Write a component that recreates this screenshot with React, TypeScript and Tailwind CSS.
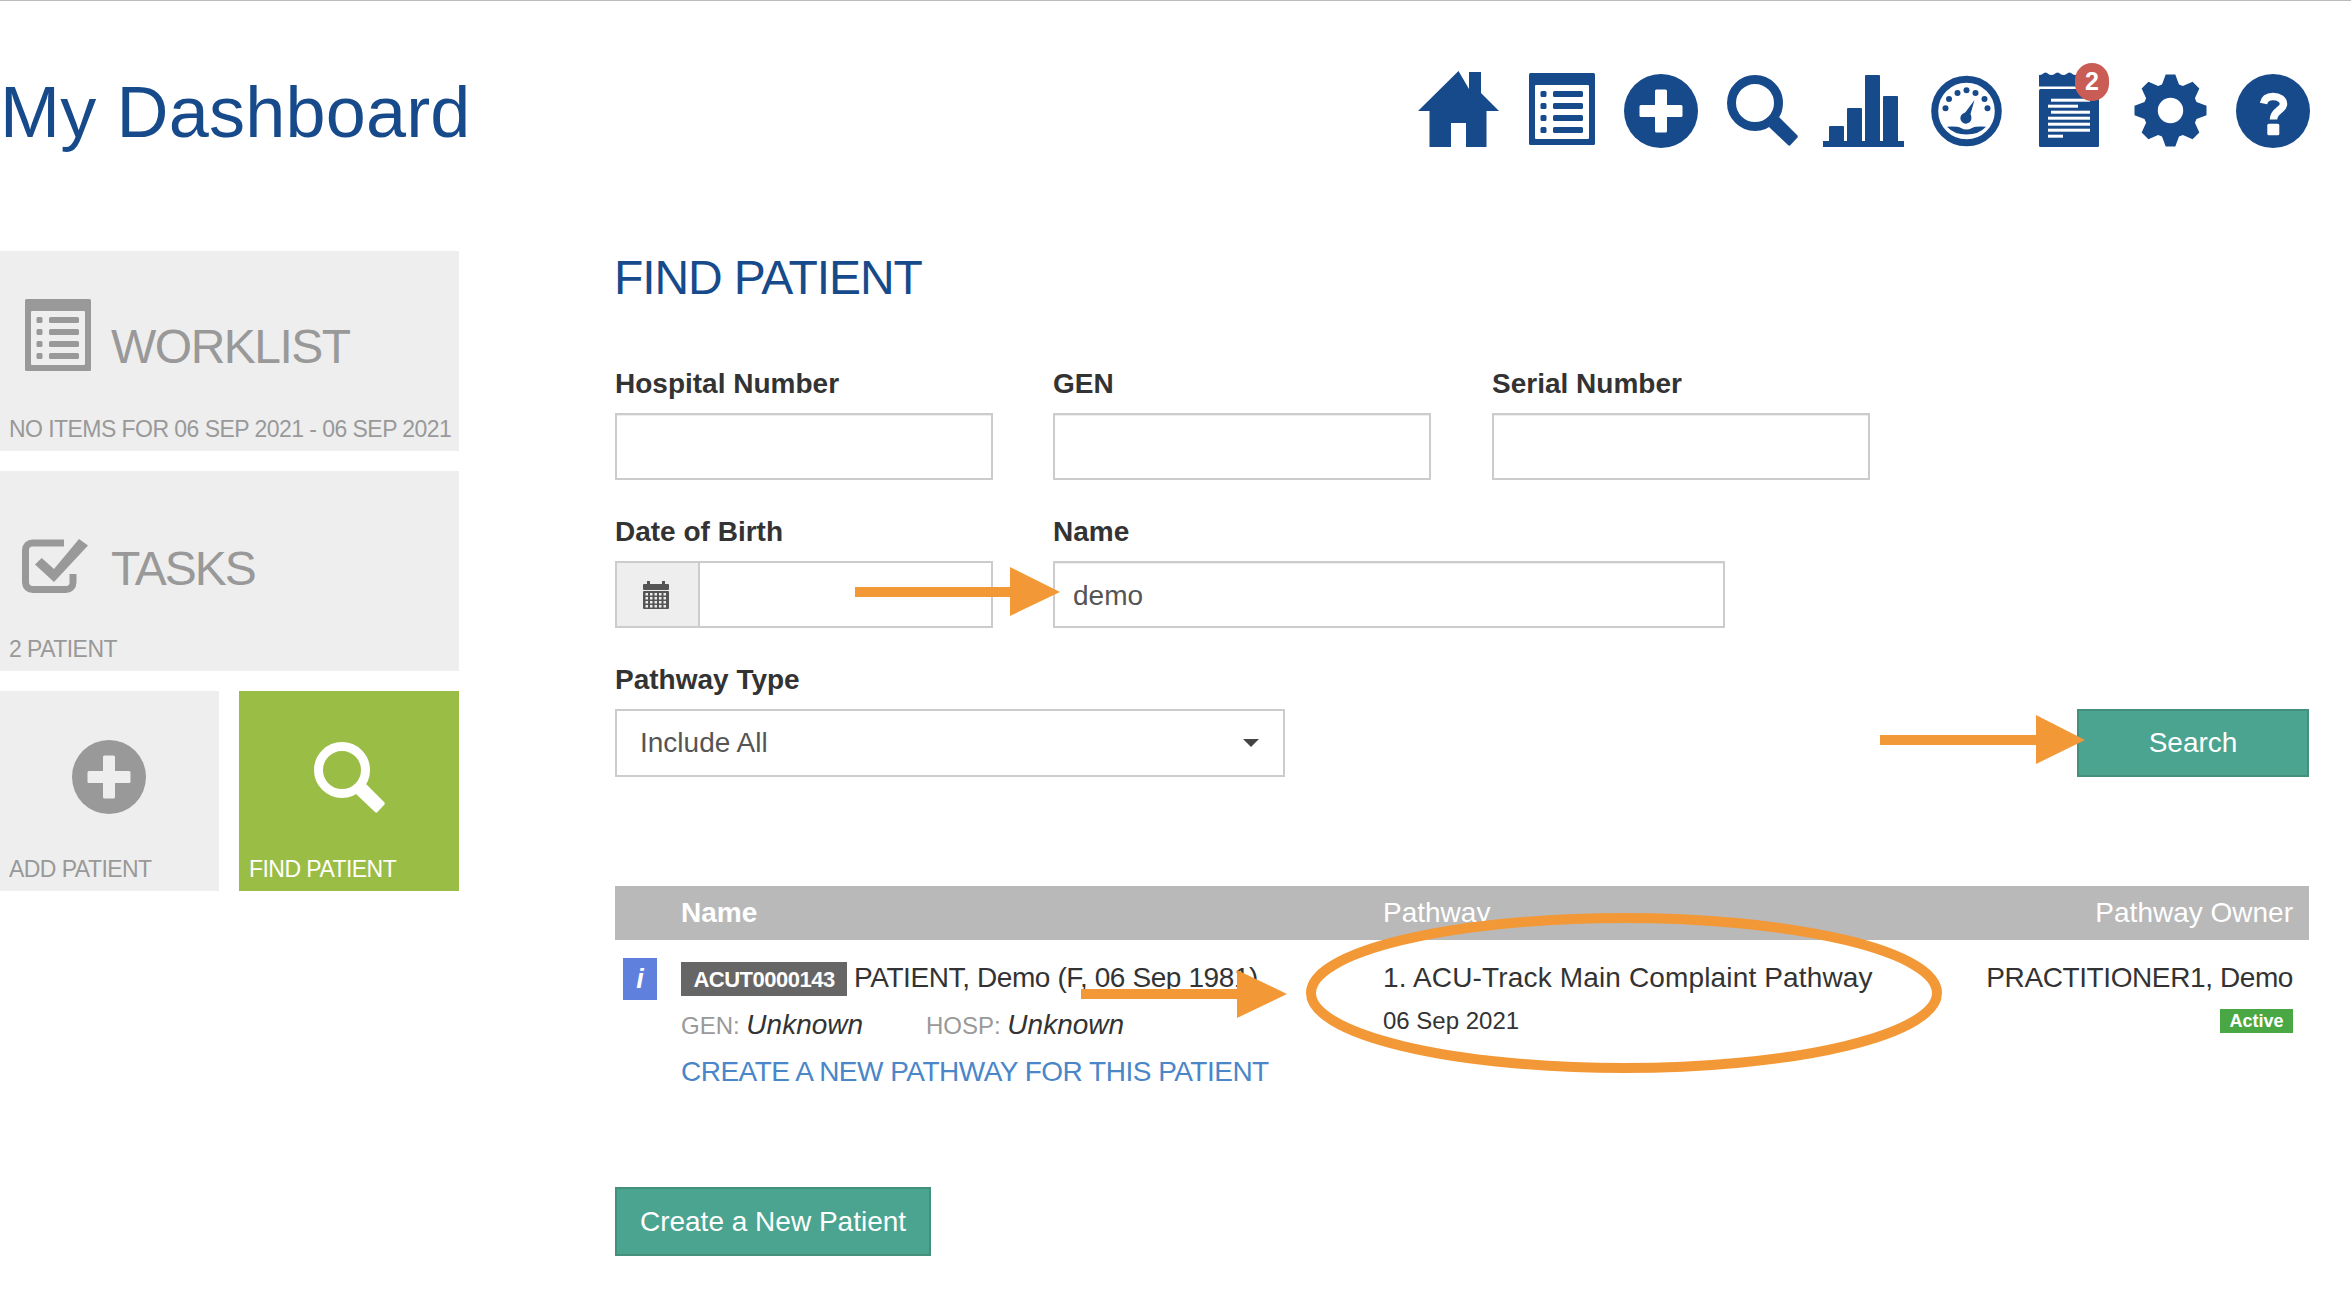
import React from "react";

function gearPath(cx: number, cy: number) {
  const pts: string[] = [];
  const rO = 36, rB = 26;
  for (let i = 0; i < 8; i++) {
    const a = (i * Math.PI) / 4;
    const p = (r: number, t: number) => {
      const x = cx + r * Math.sin(a) + t * Math.cos(a);
      const y = cy - r * Math.cos(a) + t * Math.sin(a);
      return `${x.toFixed(2)} ${y.toFixed(2)}`;
    };
    pts.push(p(rB, -8.5), p(rO, -4.8), p(rO, 4.8), p(rB, 8.5));
  }
  return "M" + pts.join("L") + "Z";
}

const Home = () => (
  <svg width="81" height="76" viewBox="0 0 81 76" className="block">
    <path fill="#174a8b" d="M40.5 0L51 18V1H63V22L81 40H68.5V76H48V52H33V76H11.5V40H0Z" />
  </svg>
);

const ListIcon = ({ c, bg }: { c: string; bg: string }) => (
  <svg width="66" height="72" viewBox="0 0 66 72" className="block">
    <rect width="66" height="72" rx="1.5" fill={c} />
    <rect x="6" y="12" width="54" height="54" rx="1" fill={bg} />
    {[18, 30, 42, 54].map((y) => (
      <g key={y} fill={c}>
        <rect x="11.5" y={y} width="6" height="6" rx="1.5" />
        <rect x="24" y={y} width="30" height="6" rx="1.5" />
      </g>
    ))}
  </svg>
);

const PlusCircle = ({ c, size, bg }: { c: string; size: number; bg: string }) => (
  <svg width={size} height={size} viewBox="0 0 74 74" className="block">
    <circle cx="37" cy="37" r="37" fill={c} />
    <rect x="31" y="15.5" width="12" height="43" rx="1.5" fill={bg} />
    <rect x="15.5" y="31" width="43" height="12" rx="1.5" fill={bg} />
  </svg>
);

const Lens = ({ c }: { c: string }) => (
  <svg width="71" height="71" viewBox="0 0 71 71" className="block">
    <circle cx="28" cy="28" r="23.5" fill="none" stroke={c} strokeWidth="9" />
    <path fill={c} d="M42 52L52 42L70.5 60.5Q71 61.5 70.5 62.5L63 70.5Q62 71 61 70Z" />
  </svg>
);

const Chart = () => (
  <svg width="81" height="72" viewBox="0 0 81 72" className="block" fill="#174a8b">
    <rect x="0" y="66" width="81" height="6" />
    <rect x="6" y="51" width="15" height="16" rx="1" />
    <rect x="24" y="33" width="15" height="34" rx="1" />
    <rect x="42" y="0" width="15" height="67" rx="1" />
    <rect x="60" y="21" width="15" height="46" rx="1" />
  </svg>
);

const Gauge = () => (
  <svg width="71" height="72" viewBox="0 0 71 72" className="block" fill="#174a8b">
    <circle cx="35.5" cy="36" r="31.8" fill="none" stroke="#174a8b" strokeWidth="7" />
    {[
      [14.5, 33.3],
      [18, 24],
      [26.5, 18],
      [35.5, 15.3],
      [44.5, 18],
      [53.5, 24],
      [56.5, 33.3],
    ].map(([x, y]) => (
      <circle key={x} cx={x} cy={y} r="3" />
    ))}
    <path d="M43.5 25L39.5 39Q40.6 41 40.4 43A5.5 5.5 0 1 1 32 38.5Q34 38 35 36.5Z" />
    <path d="M16 51.7Q26 51 30 53Q35.5 56 41 53Q45 51 55 51.7Q48 59.5 35.5 59.5Q23 59.5 16 51.7Z" />
  </svg>
);

const Notes = () => (
  <svg width="60" height="75" viewBox="0 0 60 75" className="block">
    <path
      fill="#174a8b"
      d="M0 3Q3 3 3.5 2Q6.5-1 9.5 2Q10 3 13 3Q14 3 15.5 2Q18.5-1 21.5 2Q22 3 25 3Q26 3 27.5 2Q30.500-1 33.5 2Q34 3 37 3Q38 3 39.500 2Q42.500-1 45.5 2Q46 3 49 3H60V14.500H0Z"
    />
    <rect y="17" width="60" height="58" rx="1.5" fill="#174a8b" />
    {[
      [12, 26.7, 39],
      [9, 32.7, 30],
      [12, 38.7, 39],
      [9, 44.7, 42],
      [9, 50.7, 42],
      [9, 56.7, 42],
      [9, 62.7, 15],
    ].map(([x, y, w]) => (
      <rect key={y} x={x} y={y} width={w} height="3" fill="#fff" />
    ))}
  </svg>
);

const Gear = () => (
  <svg width="73" height="73" viewBox="0 0 73 73" className="block">
    <path fill="#174a8b" fillRule="evenodd" d={gearPath(36.5, 36.5) + "M36.5 23.8A12.7 12.7 0 1 0 36.5 49.2A12.7 12.7 0 1 0 36.5 23.8Z"} />
  </svg>
);

const Help = () => (
  <svg width="74" height="74" viewBox="0 0 74 74" className="block">
    <circle cx="37" cy="37" r="37" fill="#174a8b" />
    <path
      d="M27.500 29.500C28.500 24.500 32.500 22.500 37 22.500C43 22.500 47.500 25.500 47.500 30C47.500 36 37.500 36.500 37.500 45.500"
      fill="none"
      stroke="#fff"
      strokeWidth="7.500"
    />
    <rect x="31.300" y="49.700" width="12" height="11.500" rx="1.500" fill="#fff" />
  </svg>
);

const Check = () => (
  <svg width="66" height="54" viewBox="0 0 66 54" className="block">
    <path d="M42 4H10.500A7 7 0 0 0 3.500 11V43.500A7 7 0 0 0 10.500 50.500H44A7 7 0 0 0 51 43.500V35" fill="none" stroke="#999" strokeWidth="7" />
    <path fill="#999" d="M13 25.600L19.700 19L32 30L57 0L66 6.400L32 43Z" />
  </svg>
);

const Calendar = () => (
  <svg width="26" height="28" viewBox="0 0 26 28" className="block" fill="#555">
    <rect x="0" y="3" width="26" height="6" rx="1" />
    <rect x="4" y="0" width="3" height="5" />
    <rect x="19" y="0" width="3" height="5" />
    <rect x="0" y="10" width="26" height="18" rx="1" />
    {[12, 16, 20, 24].map((y) =>
      [2.5, 7, 11.5, 16, 20.5].map((x) => <rect key={`${x}-${y}`} x={x} y={y} width="2.500" height="2.500" fill="#eee" />)
    )}
  </svg>
);

const inputCls =
  "block h-[67px] bg-white border-2 border-[#cccccc] shadow-[inset_0_1px_1px_rgba(0,0,0,0.075)] pt-[2px] px-[18px] text-[28px] text-[#555555] outline-none";
const labelCls = "block h-[32px] leading-[33px] mb-[14px] text-[28px] font-bold text-[#333333]";
const subCls = "mt-auto w-full pb-[8px] pl-[9px] text-[23px] leading-[28px] tracking-[-0.55px] whitespace-nowrap";

export default function App() {
  return (
    <div className="relative h-[1293px] overflow-hidden border-t border-[#bbbbbb] bg-white font-['Liberation_Sans',Arial,sans-serif]">
      <header className="flex h-[250px] items-start justify-between">
        <h1 className="pt-[75px] text-[72px] leading-[72px] font-normal tracking-[0.2px] text-[#174a8b]">My Dashboard</h1>
        <div className="flex items-start pt-[70px] pr-[41px]">
          <Home />
          <div className="mt-[2px] ml-[30px]"><ListIcon c="#174a8b" bg="#ffffff" /></div>
          <div className="mt-[3px] ml-[29px]"><PlusCircle c="#174a8b" size={74} bg="#ffffff" /></div>
          <div className="mt-[4px] ml-[29px]"><Lens c="#174a8b" /></div>
          <div className="mt-[4px] ml-[25px]"><Chart /></div>
          <div className="mt-[4px] ml-[27px]"><Gauge /></div>
          <div className="relative mt-[1px] ml-[37px]">
            <Notes />
            <span className="absolute top-[-9px] left-[36px] flex h-[38px] w-[34px] items-center justify-center rounded-full bg-[#c95c54] text-[25px] font-bold text-white">2</span>
          </div>
          <div className="mt-[3px] ml-[35px]"><Gear /></div>
          <div className="mt-[3px] ml-[29px]"><Help /></div>
        </div>
      </header>

      <div className="flex items-start">
        <aside className="flex w-[459px] flex-col gap-[20px]">
          <div className="flex h-[200px] flex-col bg-[#eeeeee]">
            <div className="flex items-start pt-[48px] pl-[25px]">
              <ListIcon c="#999999" bg="#eeeeee" />
              <span className="mt-[24px] ml-[20px] text-[48px] leading-[48px] tracking-[-1.5px] text-[#999999]">WORKLIST</span>
            </div>
            <p className={subCls + " text-[#999999]"}>NO ITEMS FOR 06 SEP 2021 - 06 SEP 2021</p>
          </div>
          <div className="flex h-[200px] flex-col bg-[#eeeeee]">
            <div className="flex items-start pt-[68px] pl-[22px]">
              <Check />
              <span className="mt-[6px] ml-[23px] text-[48px] leading-[48px] tracking-[-2px] text-[#999999]">TASKS</span>
            </div>
            <p className={subCls + " text-[#999999]"}>2 PATIENT</p>
          </div>
          <div className="flex gap-[20px]">
            <div className="flex h-[200px] w-[219px] flex-col items-center bg-[#eeeeee] pt-[49px]">
              <div className="-ml-[1px]"><PlusCircle c="#999999" size={74} bg="#eeeeee" /></div>
              <p className={subCls + " text-[#999999]"}>ADD PATIENT</p>
            </div>
            <div className="flex h-[200px] w-[220px] flex-col items-center bg-[#9abd45] pt-[51px]">
              <Lens c="#ffffff" />
              <p className={subCls + " pl-[10px] text-white"}>FIND PATIENT</p>
            </div>
          </div>
        </aside>

        <main className="ml-[156px] w-[1694px]">
          <h2 className="mt-[3px] -ml-[1px] text-[48px] leading-[48px] font-normal tracking-[-1.1px] text-[#174a8b]">FIND PATIENT</h2>

          <div className="mt-[65px] flex">
            <div className="w-[438px]">
              <label className={labelCls}>Hospital Number</label>
              <input className={inputCls + " w-[378px]"} />
            </div>
            <div className="w-[439px]">
              <label className={labelCls}>GEN</label>
              <input className={inputCls + " w-[378px]"} />
            </div>
            <div>
              <label className={labelCls}>Serial Number</label>
              <input className={inputCls + " w-[378px]"} />
            </div>
          </div>

          <div className="mt-[35px] flex">
            <div className="w-[438px]">
              <label className={labelCls}>Date of Birth</label>
              <div className="flex h-[67px] w-[378px] border-2 border-[#cccccc] bg-white">
                <div className="flex w-[83px] items-center justify-center border-r-2 border-[#cccccc] bg-[#eeeeee] pr-[4px]">
                  <Calendar />
                </div>
              </div>
            </div>
            <div>
              <label className={labelCls}>Name</label>
              <input className={inputCls + " w-[672px]"} defaultValue="demo" />
            </div>
          </div>

          <div className="mt-[35px] flex items-end justify-between">
            <div>
              <label className={labelCls}>Pathway Type</label>
              <div className="flex h-[68px] w-[670px] items-center justify-between border-2 border-[#cccccc] bg-white pr-[24px] pl-[23px] text-[28px] text-[#555555]">
                <span>Include All</span>
                <svg width="16" height="8" viewBox="0 0 16 8" className="block"><path d="M0 0H16L8 8Z" fill="#444" /></svg>
              </div>
            </div>
            <button className="h-[68px] w-[232px] border-2 border-[#44907c] bg-[#4aa48f] text-[28px] text-white">Search</button>
          </div>

          <div className="mt-[109px] flex h-[54px] items-center bg-[#b9b9b9] pr-[16px] text-[28px] text-white">
            <span className="w-[768px] pl-[66px] font-bold">Name</span>
            <span className="flex-1">Pathway</span>
            <span>Pathway Owner</span>
          </div>

          <div className="flex items-start pr-[16px] text-[#333333]">
            <div className="mt-[18px] ml-[8px] flex h-[42px] w-[34px] items-center justify-center bg-[#5f80dc] text-[27px] font-bold text-white italic">i</div>
            <div className="ml-[24px] w-[702px] pt-[22px]">
              <div className="flex items-start">
                <span className="flex h-[34px] w-[166px] items-center justify-center bg-[#666666] text-[22px] font-bold tracking-[-0.5px] text-white">ACUT0000143</span>
                <span className="-mt-[1px] ml-[7px] text-[28px] leading-[34px] tracking-[-0.4px] whitespace-nowrap">PATIENT, Demo (F, 06 Sep 1981)</span>
              </div>
              <div className="mt-[12px] flex text-[28px] leading-[34px]">
                <span className="w-[245px]"><span className="text-[24px] text-[#999999]">GEN: </span><em>Unknown</em></span>
                <span><span className="text-[24px] text-[#999999]">HOSP: </span><em>Unknown</em></span>
              </div>
              <a className="mt-[12px] block text-[28px] leading-[34px] tracking-[-0.5px] whitespace-nowrap text-[#4a86c8]">CREATE A NEW PATHWAY FOR THIS PATIENT</a>
            </div>
            <div className="flex-1 pt-[21px]">
              <p className="text-[28px] leading-[34px] tracking-[0.15px]">1. ACU-Track Main Complaint Pathway</p>
              <p className="mt-[12px] text-[24px] leading-[28px]">06 Sep 2021</p>
            </div>
            <div className="flex flex-col items-end pt-[21px]">
              <p className="text-[28px] leading-[34px] tracking-[-0.4px]">PRACTITIONER1, Demo</p>
              <span className="mt-[14px] flex h-[24px] w-[73px] items-center justify-center bg-[#4aa844] text-[18px] font-bold text-white">Active</span>
            </div>
          </div>

          <button className="mt-[98px] block h-[69px] w-[316px] border-2 border-[#44907c] bg-[#4aa48f] text-[28px] text-white">Create a New Patient</button>
        </main>
      </div>

      <svg className="pointer-events-none absolute top-[-1px] left-0" width="2351" height="1293" viewBox="0 0 2351 1293">
        <ellipse cx="1624" cy="993" rx="313" ry="75" fill="none" stroke="#f39837" strokeWidth="10" />
        <path fill="#f39837" d="M855 587H1010V567L1060 592L1010 616V597H855Z" />
        <path fill="#f39837" d="M1880 735H2036V715L2085 740L2036 764V745H1880Z" />
        <path fill="#f39837" d="M1081 989H1237V970L1287 994L1237 1018V999H1081Z" />
      </svg>
    </div>
  );
}
